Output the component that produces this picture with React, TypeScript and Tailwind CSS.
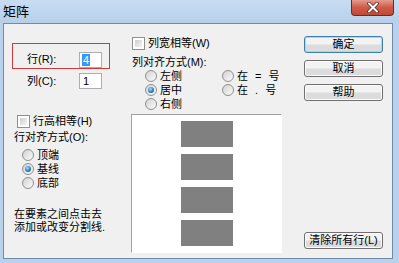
import type { ReactNode } from 'react'

const font = "font-['Liberation_Sans','Noto_Sans_CJK_SC',sans-serif]"

function Check() {
  return (
    <span className="block w-[13px] h-[13px] shrink-0 border border-[#8e8f8f] bg-white p-[2px]">
      <span className="block w-full h-full bg-linear-to-br from-[#cfcfcf] to-[#f4f4f4]" />
    </span>
  )
}

function Radio({ on = false }: { on?: boolean }) {
  return (
    <span className="flex items-center justify-center w-[12px] h-[12px] shrink-0 rounded-full border border-[#8e8f8f] bg-linear-to-br from-[#d2d2d2] to-[#fbfbfb]">
      {on && (
        <span className="block w-[6px] h-[6px] rounded-full bg-[radial-gradient(circle_at_40%_35%,#a6e2ff,#2a7cc0_55%,#133f6e)]" />
      )}
    </span>
  )
}

function RadioRow({ label, on, wide }: { label: string; on?: boolean; wide?: boolean }) {
  return (
    <div className="flex items-center h-[14px] gap-[3px]">
      <Radio on={on} />
      <span className={wide ? 'tracking-[2px]' : ''}>{label}</span>
    </div>
  )
}

function Btn({ children, def = false, className = '' }: { children: ReactNode; def?: boolean; className?: string }) {
  return (
    <div
      className={
        'h-[17px] rounded-[3px] border flex items-center justify-center bg-linear-to-b from-[#f3f3f3] from-45% to-[#dcdcdc] to-55% text-black ' +
        (def
          ? 'border-[#3c7fb1] shadow-[inset_0_0_0_1px_#9ddcf7]'
          : 'border-[#707070] shadow-[inset_0_0_0_1px_#fbfbfb]') +
        ' ' +
        className
      }
    >
      {children}
    </div>
  )
}

export default function App() {
  return (
    <div className={`w-[399px] h-[263px] flex flex-col bg-[#b9d1ea] ${font} text-[11px] leading-[13px] text-black`}>
      {/* title bar */}
      <div className="h-[23px] flex items-start bg-linear-to-b from-[#c8ddf3] to-[#b6cfe9]">
        <span className="ml-[3px] mt-[4px] text-[13px] leading-[15px] text-black">矩阵</span>
        <div className="ml-auto mr-[5px] w-[43px] h-[16px] rounded-b-[4px] border border-t-0 border-[#6e2a22] bg-linear-to-b from-[#e49a8e] via-[#cf5a48] to-[#c14a36] flex items-center justify-center">
          <svg width="14" height="11" viewBox="0 0 14 11">
            <path d="M3 1.5 L11 9.5 M11 1.5 L3 9.5" stroke="#5a2a22" strokeWidth="3.6" strokeLinecap="round" />
            <path d="M3 1.5 L11 9.5 M11 1.5 L3 9.5" stroke="#ffffff" strokeWidth="2" strokeLinecap="round" />
          </svg>
        </div>
      </div>

      {/* client area */}
      <div className="ml-[3px] mr-[6px] mb-[4px] flex-1 border border-[#6e8bab] bg-[#f0f0f0] flex pl-[8px]">
        {/* left column */}
        <div className="w-[98px] flex flex-col">
          <div className="mt-[19px] h-[26px] border border-[#d23a3a] pl-[14px] pt-[7px] flex items-center">
            <span className="w-[52px]">行(R):</span>
            <span className="w-[23px] h-[16px] border border-[#abadb3] bg-white flex items-center pl-[2px]">
              <span className="bg-[#3399ff] text-white px-[1px] leading-[12px]">4</span>
            </span>
          </div>
          <div className="mt-[4px] pl-[15px] flex items-center">
            <span className="w-[52px]">列(C):</span>
            <span className="w-[23px] h-[16px] border border-[#abadb3] bg-white flex items-center pl-[3px]">1</span>
          </div>
          <div className="mt-[26px] pl-[5px] flex items-center gap-[3px] h-[13px]">
            <Check />
            <span>行高相等(H)</span>
          </div>
          <div className="mt-[3px] pl-[2px]">行对齐方式(O):</div>
          <div className="mt-[4px] pl-[10px] flex flex-col">
            <RadioRow label="顶端" />
            <RadioRow label="基线" on />
            <RadioRow label="底部" />
          </div>
          <div className="mt-[18px] pl-[2px]">
            <div>在要素之间点击去</div>
            <div>添加或改变分割线.</div>
          </div>
        </div>

        {/* middle column */}
        <div className="ml-[21px] w-[151px] flex flex-col">
          <div className="mt-[13px] pl-[1px] flex items-center gap-[3px] h-[13px]">
            <Check />
            <span>列宽相等(W)</span>
          </div>
          <div className="mt-[6px] pl-[1px]">列对齐方式(M):</div>
          <div className="pl-[14px] flex">
            <div className="w-[77px] flex flex-col">
              <RadioRow label="左侧" />
              <RadioRow label="居中" on />
              <RadioRow label="右侧" />
            </div>
            <div className="flex flex-col">
              <RadioRow label="在 = 号" wide />
              <RadioRow label="在 . 号" wide />
            </div>
          </div>
          <div className="mt-[3px] h-[139px] border border-t-[#a0a0a0] border-l-[#a0a0a0] border-r-white border-b-white bg-white flex flex-col items-center pt-[6px] gap-[7px]">
            <div className="w-[52px] h-[26px] bg-[#808080]" />
            <div className="w-[52px] h-[26px] bg-[#808080]" />
            <div className="w-[52px] h-[26px] bg-[#808080]" />
            <div className="w-[52px] h-[26px] bg-[#808080]" />
          </div>
        </div>

        {/* right column */}
        <div className="ml-[22px] w-[79px] flex flex-col">
          <Btn def className="mt-[12px]">确定</Btn>
          <Btn className="mt-[7px]">取消</Btn>
          <Btn className="mt-[7px]">帮助</Btn>
          <Btn className="mt-auto mb-[9px]">清除所有行(L)</Btn>
        </div>
      </div>
    </div>
  )
}
